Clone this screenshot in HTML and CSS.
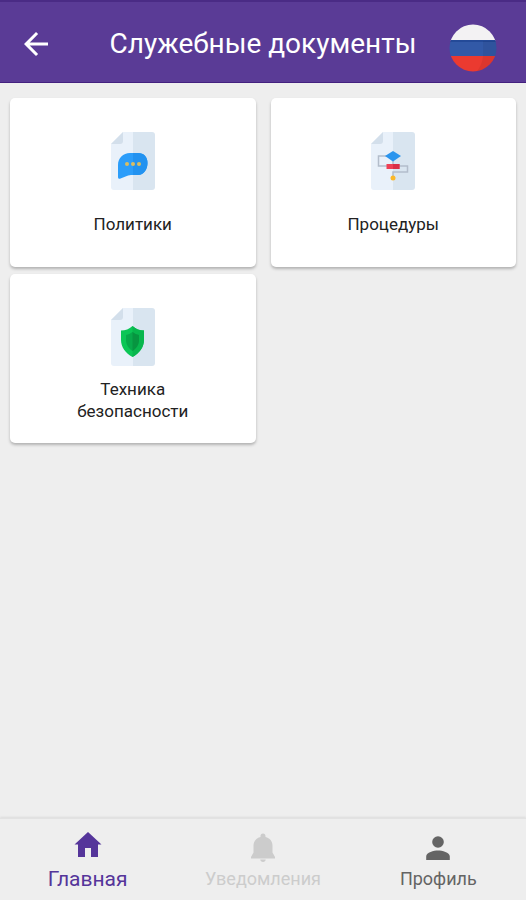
FILE: index.html
```html
<!DOCTYPE html>
<html lang="ru">
<head>
<meta charset="utf-8">
<meta name="viewport" content="width=device-width, initial-scale=1">
<title>Служебные документы</title>
<link rel="stylesheet" href="styles.css">
</head>
<body>
<header class="topbar">
  <button class="icon-button" type="button" aria-label="Назад">
    <svg class="back-icon" viewBox="0 0 24 24" aria-hidden="true"><path fill="#fff" d="M20 11H7.830l5.590-5.590L12 4l-8 8 8 8 1.410-1.410L7.830 13H20z"/></svg>
  </button>
  <h1 class="title">Служебные документы</h1>
  <button class="icon-button flag-button" type="button" aria-label="Русский язык">
    <svg class="flag" viewBox="0 0 48 48" aria-hidden="true">
      <defs><clipPath id="disc"><circle cx="24" cy="24" r="23.500"/></clipPath></defs>
      <g clip-path="url(#disc)">
        <path fill="#f3f2f3" d="M0 0h48v17H0z"/>
        <path fill="#3259a7" d="M0 16h48v17H0z"/>
        <path fill="#244a98" d="M0 16h48v2H0z"/>
        <path fill="#eb3a30" d="M0 32h48v16H0z"/>
        <path fill="#000" fill-opacity=".06" d="M34 17h14v31H27q6-6 7-16z"/>
      </g>
    </svg>
  </button>
</header>

<main class="grid">
  <a class="card" href="#policies">
    <svg class="doc-icon" viewBox="0 0 44 58" aria-hidden="true">
      <path fill="#e9f1fa" d="M12 0h11v58H3q-3 0-3-3V12z"/>
      <path fill="#d9e5f0" d="M22 0h19q3 0 3 3v52q0 3-3 3H22z"/>
      <path fill="#d3dfeb" d="M12 0v9q0 3-3 3H0z"/>
      <path fill="#2b9dfa" d="M19 21h8c6 0 9.500 4 9.500 10S33 43 27 43h-7c-4 .5-7 2-10.500 3.500-1.500.8-2.500 0-2.500-1.500V33c0-7 5-12 12-12z"/>
      <path fill="#2292f0" d="M22 21h5c6 0 9.500 4 9.500 10S33 43 27 43h-5z"/>
      <g fill="#d8bd62"><circle cx="16" cy="32" r="2"/><circle cx="22" cy="32" r="2"/><circle cx="28" cy="32" r="2"/></g>
    </svg>
    <span class="label">Политики</span>
  </a>
  <a class="card" href="#procedures">
    <svg class="doc-icon" viewBox="0 0 44 58" aria-hidden="true">
      <path fill="#e9f1fa" d="M12 0h11v58H3q-3 0-3-3V12z"/>
      <path fill="#d9e5f0" d="M22 0h19q3 0 3 3v52q0 3-3 3H22z"/>
      <path fill="#d3dfeb" d="M12 0v9q0 3-3 3H0z"/>
      <path fill="none" stroke="#b3bdcb" stroke-width="1.500" d="M16 24H7.500v10H18M27 34h9.500v6H22v5M22 27v6"/>
      <path fill="#2b95ee" d="m22 19 8 5-8 5.500-8-5.500z"/>
      <path fill="#ee4055" d="M15.500 32h13v5h-13z"/>
      <path fill="#d92f47" d="M22 32h6.500v5H22z"/>
      <circle cx="22" cy="46" r="2.500" fill="#fbb829"/>
    </svg>
    <span class="label">Процедуры</span>
  </a>
  <a class="card" href="#safety">
    <svg class="doc-icon" viewBox="0 0 44 58" aria-hidden="true">
      <path fill="#e9f1fa" d="M12 0h11v58H3q-3 0-3-3V12z"/>
      <path fill="#d9e5f0" d="M22 0h19q3 0 3 3v52q0 3-3 3H22z"/>
      <path fill="#d3dfeb" d="M12 0v9q0 3-3 3H0z"/>
      <path fill="#0cc656" d="M21.500 18c3.500 3 7 4.500 11.500 4.500V32c0 7-4.500 13-11.500 17C14.500 45 10 39 10 32v-9.500c4.500 0 8-1.500 11.500-4.500z"/>
      <path fill="#08b64d" d="M21.500 18c3.500 3 7 4.500 11.500 4.500V32c0 7-4.500 13-11.500 17z"/>
      <path fill="#08a94a" d="M21.500 24c2 1.500 4 2.500 6.500 3v5c0 4.500-2.500 8.500-6.500 11-4-2.500-6.500-6.500-6.500-11v-5c2.500-.5 4.500-1.500 6.500-3z"/>
      <path fill="#079540" d="M21.500 24c2 1.500 4 2.500 6.500 3v5c0 4.500-2.500 8.500-6.500 11z"/>
    </svg>
    <span class="label">Техника безопасности</span>
  </a>
</main>

<nav class="tabs">
  <a class="tab tab-active" href="#home">
    <svg class="tab-icon" viewBox="0 0 32 32" aria-hidden="true"><path fill="currentColor" d="M16 1 2.500 13.500H6V26h7v-9h6v9h7V13.500h3.500z"/></svg>
    <span>Главная</span>
  </a>
  <a class="tab tab-muted" href="#notifications">
    <svg class="tab-icon" viewBox="0 0 32 32" aria-hidden="true"><path fill="currentColor" d="M13.300 28.500h5.400C18.700 30 17.500 31 16 31s-2.700-1-2.700-2.500zM25.500 21.500v-6.800c0-4.500-2.700-7.600-7-8.700V5c0-1.400-1-2.500-2.500-2.500S13.500 3.600 13.500 5v1c-4.300 1.100-7 4.200-7 8.700v6.800L4 26v1.500h24V26z"/></svg>
    <span>Уведомления</span>
  </a>
  <a class="tab" href="#profile">
    <svg class="tab-icon" viewBox="0 0 32 32" aria-hidden="true"><circle cx="16" cy="11" r="5.800" fill="currentColor"/><path fill="currentColor" d="M16 19.500c-4 0-11.800 1.900-11.800 6V29h23.600v-3.500c0-4.100-7.800-6-11.800-6z"/></svg>
    <span>Профиль</span>
  </a>
</nav>
</body>
</html>
```

FILE: styles.css
```css
* {
  box-sizing: border-box;
}

body {
  margin: 0;
  min-height: 100vh;
  display: flex;
  flex-direction: column;
  background: #eee;
  color: #222;
  font-family: Roboto, "Noto Sans", sans-serif;
}

a {
  color: inherit;
  text-decoration: none;
}

svg {
  display: block;
}

.topbar {
  display: grid;
  grid-template-columns: 48px 1fr 48px;
  align-items: center;
  padding: 14px 29px 10px;
  border-top: 2px solid #4a2b85;
  border-bottom: 1px solid #43207f;
  background: #5a3b96;
  color: #fff;
}

.icon-button {
  justify-self: start;
  padding: 0;
  border: 0;
  background: none;
  cursor: pointer;
}

.back-icon {
  width: 36px;
  height: 36px;
  margin-left: -11px;
}

.title {
  margin: 0;
  font-size: 28px;
  font-weight: 400;
  line-height: 56px;
  text-align: center;
}

.flag-button {
  justify-self: end;
  align-self: end;
}

.flag {
  width: 48px;
  height: 48px;
}

.grid {
  flex: 1;
  display: grid;
  grid-template-columns: 1fr 1fr;
  align-content: start;
  gap: 7px 15px;
  padding: 15px 10px;
}

.card {
  display: flex;
  flex-direction: column;
  align-items: center;
  gap: 12px;
  padding: 34px 56px 21px;
  border-radius: 5px;
  background: #fff;
  box-shadow: 0 2px 3px rgba(0, 0, 0, 0.25);
}

.doc-icon {
  width: 44px;
  height: 58px;
}

.label {
  display: flex;
  align-items: center;
  min-height: 44px;
  font-size: 17px;
  line-height: 22px;
  text-align: center;
}

.tabs {
  display: grid;
  grid-template-columns: repeat(3, 1fr);
  padding: 12px 0 7px;
  border-top: 1px solid #e2e2e2;
  box-shadow: 0 -1px 2px rgba(0, 0, 0, 0.08);
}

.tab {
  display: flex;
  flex-direction: column;
  align-items: center;
  gap: 2px;
  color: #646464;
  font-size: 18px;
  line-height: 28px;
}

.tab-icon {
  width: 32px;
  height: 32px;
}

.tab-active {
  color: #55359a;
  font-size: 21px;
}

.tab-muted {
  color: #ccc;
}
```
